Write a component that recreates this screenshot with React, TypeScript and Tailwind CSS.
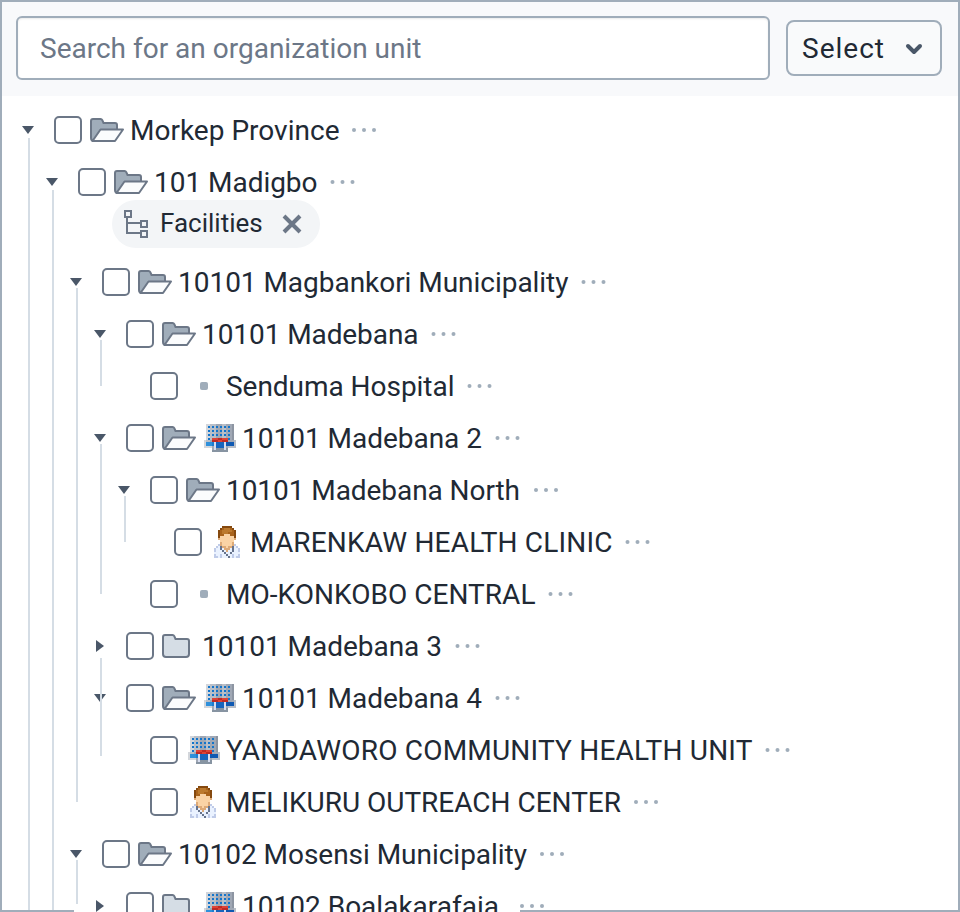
import React from "react";

type Unit = {
  name: string;
  w: number;
  icon?: "hospital" | "doctor";
  kind?: "open" | "closed" | "leaf";
  dotGap?: number;
  lineTop?: string;
  lineBottom?: string;
  chip?: boolean;
  children?: Unit[];
};

const tree: Unit = {
  name: "Morkep Province",
  w: 209.5,
  dotGap: 14.5,
  lineTop: "top-[34px]",
  lineBottom: "bottom-0",
  children: [
    {
      name: "101 Madigbo",
      w: 163.5,
      lineTop: "top-[34px]",
      lineBottom: "bottom-0",
      chip: true,
      children: [
        {
          name: "10101 Magbankori Municipality",
          w: 390.5,
          children: [
            { name: "10101 Madebana", w: 216.5, children: [{ name: "Senduma Hospital", w: 228.5, kind: "leaf" }] },
            {
              name: "10101 Madebana 2",
              w: 240,
              dotGap: 15.5,
              icon: "hospital",
              children: [
                {
                  name: "10101 Madebana North",
                  w: 294,
                  dotGap: 16,
                  children: [{ name: "MARENKAW HEALTH CLINIC", w: 362.5, kind: "leaf", icon: "doctor" }],
                },
                { name: "MO-KONKOBO CENTRAL", w: 309.5, kind: "leaf" },
              ],
            },
            { name: "10101 Madebana 3", w: 240, dotGap: 15.5, kind: "closed" },
            {
              name: "10101 Madebana 4",
              w: 240,
              dotGap: 15.5,
              icon: "hospital",
              lineTop: "-top-[14px]",
              lineBottom: "bottom-[72px]",
              children: [
                { name: "YANDAWORO COMMUNITY HEALTH UNIT", w: 526.5, kind: "leaf", icon: "hospital" },
                { name: "MELIKURU OUTREACH CENTER", w: 395, kind: "leaf", icon: "doctor" },
              ],
            },
          ],
        },
        {
          name: "10102 Mosensi Municipality",
          w: 349,
          lineBottom: "bottom-7",
          children: [
            { name: "10102 Boalakarafaia", w: 257, kind: "closed", icon: "hospital", dotGap: 23 },
          ],
        },
      ],
    },
  ],
};

function OpenFolder() {
  return (
    <svg width="36" height="28" viewBox="0 0 36 28" className="shrink-0">
      <path d="M1 22V5a2 2 0 0 1 2-2h7.5a2 2 0 0 1 1.8 1.1L13.5 7H25a2 2 0 0 1 2 2v5L20 25H4a3 3 0 0 1-3-3Z" fill="#A0ADBA" stroke="#6C7787" strokeWidth="2" />
      <path d="M10.5 13.5H33L25 25H2.5Z" fill="#FBFCFD" stroke="#6C7787" strokeWidth="2" strokeLinejoin="round" />
    </svg>
  );
}

function ClosedFolder() {
  return (
    <svg width="36" height="28" viewBox="0 0 36 28" className="shrink-0">
      <path d="M1 22V5a2 2 0 0 1 2-2h7.5a2 2 0 0 1 1.8 1.1L13.5 7H25a2 2 0 0 1 2 2v13a3 3 0 0 1-3 3H4a3 3 0 0 1-3-3Z" fill="#D5DDE5" stroke="#6C7787" strokeWidth="2" />
    </svg>
  );
}

function Pixels({ rows, palette }: { rows: string[]; palette: Record<string, string> }) {
  return (
    <svg width="32" height="32" viewBox="0 0 16 16" shapeRendering="crispEdges" className="shrink-0">
      {rows.flatMap((row, y) =>
        row.split("").map((c, x) =>
          palette[c] ? <rect key={`${x}-${y}`} x={x} y={y} width="1" height="1" fill={palette[c]} /> : null,
        ),
      )}
    </svg>
  );
}

const hospitalRows = [
  "................",
  ".llgggmmmggmmmn.",
  ".lbgbgbmbgbmbmn.",
  ".llgggmmmggmmmn.",
  ".lbgbgbmbgbmbmn.",
  ".llgggmmmggmmmn.",
  ".lbgbgbmbgbmbmn.",
  ".llgggmmmggmmmn.",
  ".lbgrrrRRrrrbmn.",
  "lggmRRRrrRRRmmmg",
  "lcccCwddddwDDDDg",
  "lcccCwddddwDDDDg",
  "llllmwddddwmgggg",
  "....mwssssws....",
  "....ssssssss....",
  "................",
];
const hospitalPalette = {
  l: "#D3D6DB", g: "#B9BFC8", m: "#A0A8B5", n: "#8D95A2", b: "#1475CB", r: "#DE4336", R: "#BE2A25",
  c: "#2E90DB", C: "#1C7DD0", w: "#D6DDF0", d: "#1765BE", D: "#0F59B2", s: "#8794A2",
};
const doctorRows = [
  ".....BBBBB......",
  "....BhHHHhB.....",
  "...BhHHHHHhB....",
  "...BhHHHhhhB....",
  "...BhhfffhhB....",
  "...BfffffffB....",
  "...efffffffe....",
  "....fffffff.....",
  "....efffffe.....",
  "...vefffffev....",
  "..vwkeefeekwv...",
  ".vwwkweeewkwwv..",
  ".vwwwkwewwkwwv..",
  ".wwwwwkwwkwwww..",
  ".vwwvwwkwwvwwv..",
  ".vvwvwwwkwvwvv..",
];
const doctorPalette = {
  B: "#85490F", h: "#A9631B", H: "#BC7A2E", f: "#FAD3A5", e: "#DDAA78",
  w: "#EAF2FF", v: "#BFCBE8", k: "#66738C",
};

function Row({ unit }: { unit: Unit }) {
  const kind = unit.kind ?? "open";
  const dots = unit.w + (unit.dotGap ?? 15);
  return (
    <div className="flex h-[52px] items-center">
      <div className="flex w-9 shrink-0 items-center pl-[3px]">
        {kind !== "leaf" && (
          <svg width="14" height="14" viewBox="0 0 14 14">
            {kind === "open" ? <path d="M1 3H13L7 11Z" fill="#4A5768" /> : <path d="M3 1V13L11 7Z" fill="#4A5768" />}
          </svg>
        )}
      </div>
      <div className="mr-2 size-7 shrink-0 rounded-[5px] border-2 border-[#6C7787] bg-white" />
      {kind === "open" && <OpenFolder />}
      {kind === "closed" && <ClosedFolder />}
      {kind === "leaf" && !unit.icon && (
        <span className="flex w-9 justify-center">
          <span className="size-2 rounded-[2px] bg-[#A0ADBA]" />
        </span>
      )}
      {unit.icon && (
        <span className={kind === "leaf" ? "ml-0.5 mr-0.5 flex" : "ml-1.5 mr-0.5 flex"}>
          <Pixels
            rows={unit.icon === "hospital" ? hospitalRows : doctorRows}
            palette={unit.icon === "hospital" ? hospitalPalette : doctorPalette}
          />
        </span>
      )}
      <svg width={unit.w + 48} height="40" className="ml-1 shrink-0 overflow-visible">
        <text x="0" y="30" textLength={unit.w} fontSize="28" fill="#212934">{unit.name}</text>
        <g fill="#A0ADBA">
          <circle cx={dots} cy="20" r="2" />
          <circle cx={dots + 10} cy="20" r="2" />
          <circle cx={dots + 20} cy="20" r="2" />
        </g>
      </svg>
    </div>
  );
}

function Node({ unit }: { unit: Unit }) {
  return (
    <div className="relative">
      <Row unit={unit} />
      {unit.chip && <Chip />}
      {unit.children && (
        <>
          <div className="pl-6">
            {unit.children.map((c) => <Node key={c.name} unit={c} />)}
          </div>
          <span className={`absolute left-[10px] w-0.5 bg-[#D5DDE5] ${unit.lineTop ?? "top-8"} ${unit.lineBottom ?? "bottom-[26px]"}`} />
        </>
      )}
    </div>
  );
}

function Chip() {
  return (
    <div className="-mt-2 mb-2 ml-[70px] flex h-12 w-52 items-center rounded-full bg-[#F3F5F7] pl-3">
      <svg width="26" height="28" viewBox="0 0 26 28" fill="none" stroke="#6C7787" strokeWidth="2">
        <path d="M1 1H7V7H1ZM17 11H23V17H17ZM17 21H23V27H17ZM3 7V23H17M3 13H17" />
      </svg>
      <span className="mb-0.5 ml-2.5 text-[26px] leading-none text-[#212934]">Facilities</span>
      <svg width="20" height="20" viewBox="0 0 20 20" className="ml-[19px]" stroke="#6C7787" strokeWidth="4">
        <path d="M2 2L18 18M18 2L2 18" />
      </svg>
    </div>
  );
}

export default function App() {
  return (
    <div className="relative h-[912px] w-[960px] overflow-hidden border-x-2 border-t-2 border-[#A0ADBA] bg-white font-['Roboto',sans-serif] text-[#212934]">
      <header className="flex h-[94px] items-center gap-4 bg-[#F8F9FB] px-3.5 pb-0.5">
        <div className="flex h-16 w-[754px] items-center rounded-md border-2 border-[#A0ADBA] bg-white pl-[22px] pt-px text-[28px] text-[#6C7787] shadow-[inset_0_1px_2px_rgba(48,54,60,0.1)]">
          Search for an organization unit
        </div>
        <button className="flex h-14 w-[156px] items-center rounded-lg border-2 border-[#A0ADBA] bg-[#F9FAFB] pl-3.5 pt-px text-[28px] tracking-[1px]">
          Select
          <svg width="18" height="12" viewBox="0 0 18 12" className="ml-5" fill="none" stroke="#4A5768" strokeWidth="4" strokeLinecap="round" strokeLinejoin="round">
            <path d="M3 3L9 9L15 3" />
          </svg>
        </button>
      </header>
      <main className="pl-4 pt-2">
        <Node unit={tree} />
      </main>
      <div className="absolute inset-x-0 bottom-0 flex h-0.5 justify-between">
        <span className="w-[72px] bg-[#A0ADBA]" />
        <span className="w-[438px] bg-[#A0ADBA]" />
      </div>
    </div>
  );
}
